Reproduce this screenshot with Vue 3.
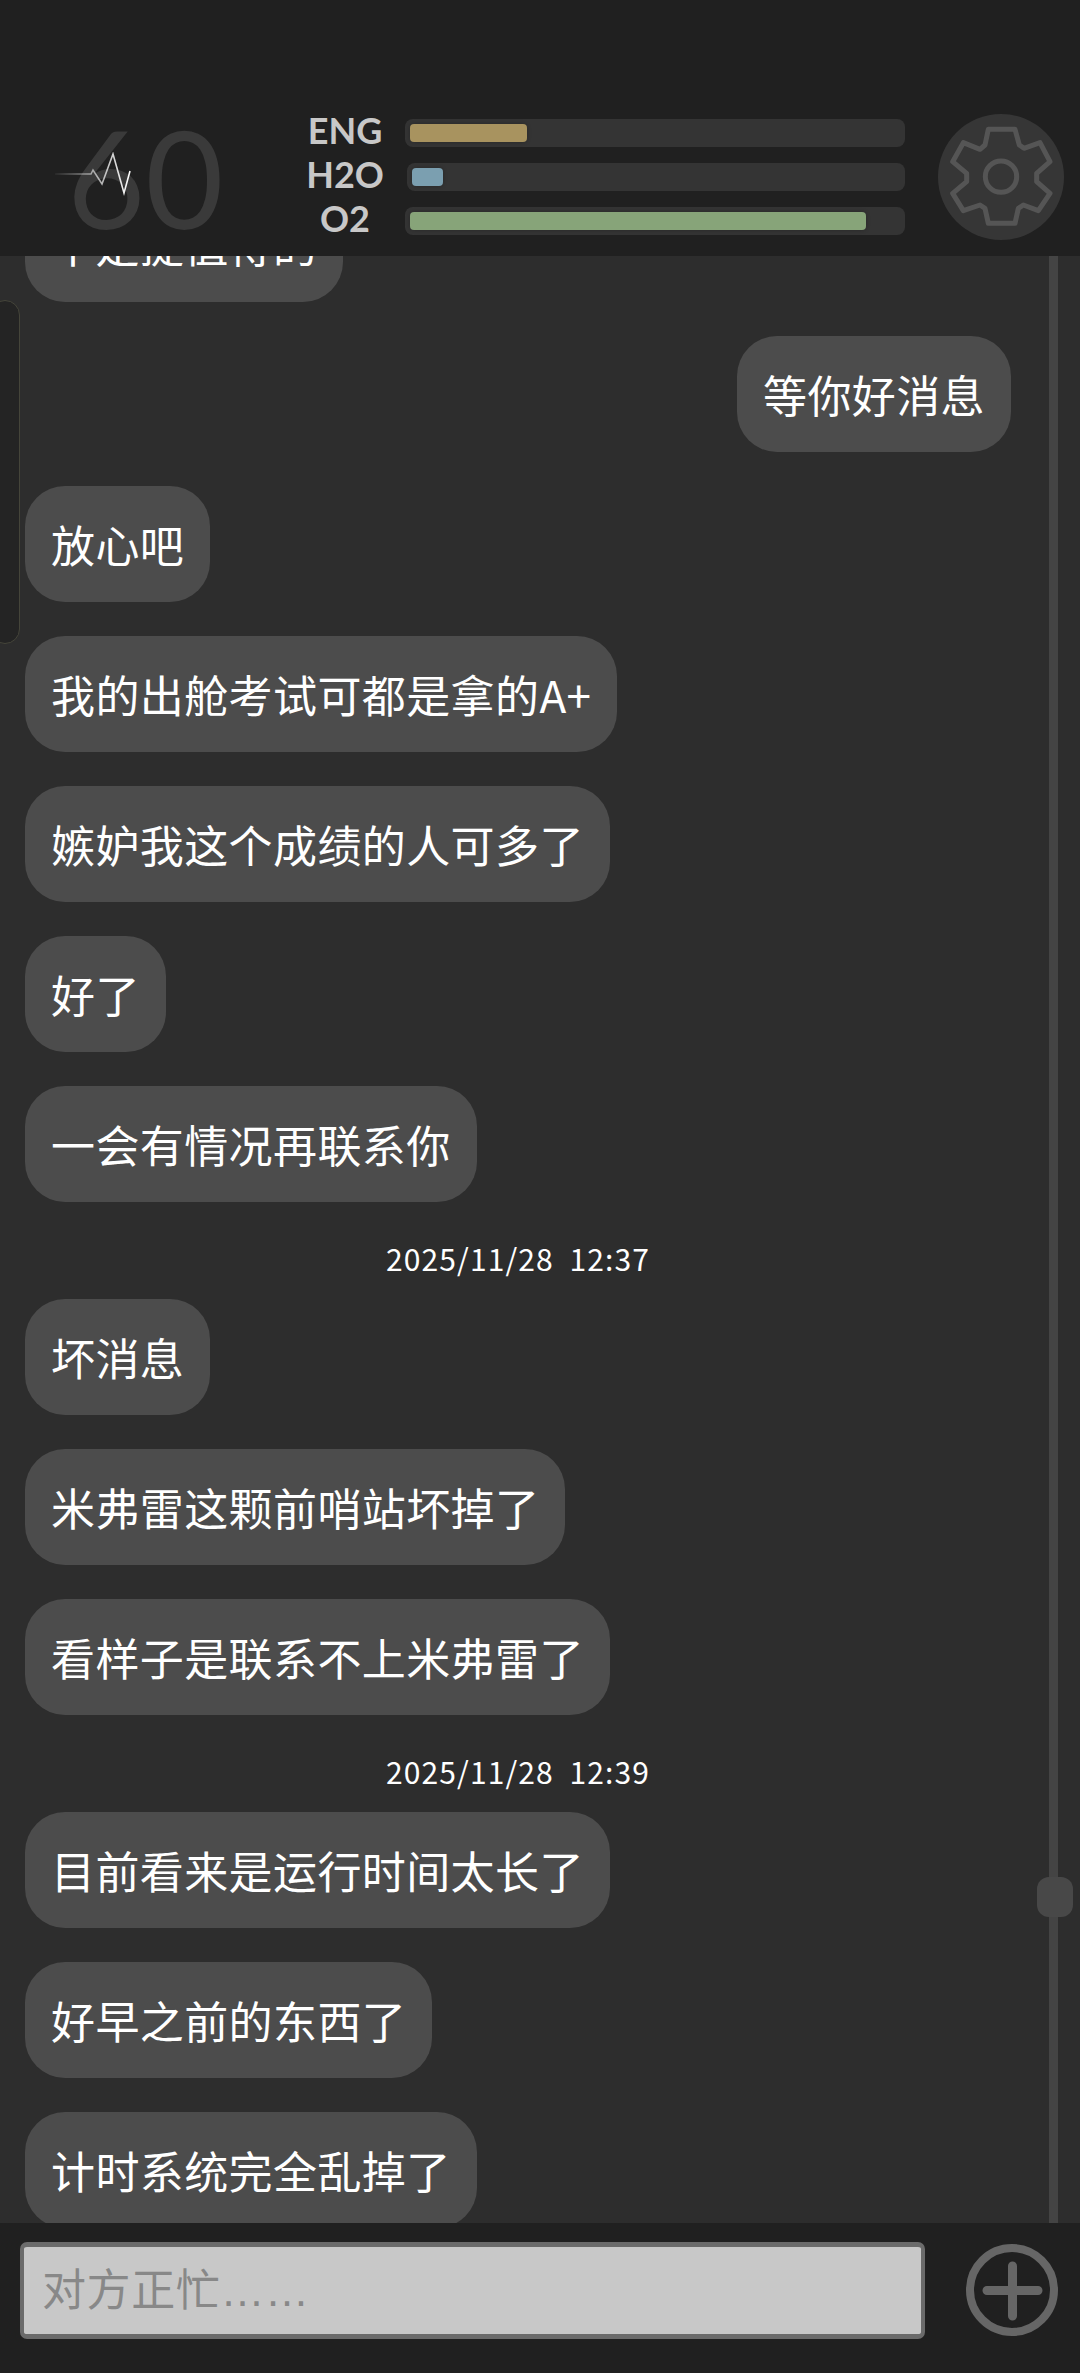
<template>
  <div class="screen">
    <header class="status-bar">
      <div class="heart-rate">
        <span class="rate-value">60</span>
        <svg class="rate-line" width="90" height="50" viewBox="0 0 90 50" fill="none">
          <defs>
            <linearGradient id="pulseFade" x1="0" y1="0" x2="1" y2="0">
              <stop offset="0" stop-color="#fff" stop-opacity="0.05" />
              <stop offset="0.5" stop-color="#fff" stop-opacity="0.55" />
              <stop offset="1" stop-color="#fff" />
            </linearGradient>
          </defs>
          <path
            d="M0 22 H36 L38 18 L47 32 L58 2 L69 41 L75 19"
            stroke="url(#pulseFade)"
            stroke-width="1.6"
          />
        </svg>
      </div>

      <div class="meters">
        <div v-for="meter in meters" :key="meter.label" class="meter">
          <span class="meter-label">{{ meter.label }}</span>
          <div class="meter-track" :class="meter.cls">
            <div class="meter-fill" :style="{ width: meter.fill + 'px' }"></div>
          </div>
        </div>
      </div>

      <button class="settings" type="button" aria-label="Settings">
        <svg width="126" height="126" viewBox="174 72 378 378" fill="none">
          <path
            class="gear"
            d="M325 118 H405 L418 165 L432 175 L480 158 L510 215 L470 250 V275 L510 310 L475 362 L430 345 L415 355 L405 400 H325 L315 355 L300 345 L250 362 L218 310 L260 275 V250 L218 215 L250 158 L300 178 L315 165 Z"
          />
          <circle class="gear" cx="363" cy="260" r="47" />
        </svg>
      </button>
    </header>

    <main class="chat">
      <div class="side-tab"></div>
      <ul class="messages">
        <template v-for="(item, index) in messages" :key="index">
          <li v-if="item.time" class="timestamp">{{ item.time }}</li>
          <li v-else class="message" :class="{ mine: item.mine }">
            <span class="bubble">{{ item.text }}</span>
          </li>
        </template>
      </ul>
      <div class="scroll-track">
        <div class="scroll-thumb"></div>
      </div>
    </main>

    <footer class="composer">
      <div class="input-box">对方正忙……</div>
      <button class="add" type="button" aria-label="Add">
        <svg width="92" height="92" viewBox="0 0 92 92" fill="none">
          <circle cx="46" cy="46" r="42" />
          <path d="M46.5 22 V72 M21 46.5 H72" class="plus" />
        </svg>
      </button>
    </footer>
  </div>
</template>

<script setup>
const meters = [
  { label: 'ENG', fill: 117, cls: '' },
  { label: 'H2O', fill: 31, cls: 'water' },
  { label: 'O2', fill: 456, cls: 'oxygen' },
];

const messages = [
  { text: '不是提值得的' },
  { text: '等你好消息', mine: true },
  { text: '放心吧' },
  { text: '我的出舱考试可都是拿的A+' },
  { text: '嫉妒我这个成绩的人可多了' },
  { text: '好了' },
  { text: '一会有情况再联系你' },
  { time: '2025/11/28  12:37' },
  { text: '坏消息' },
  { text: '米弗雷这颗前哨站坏掉了' },
  { text: '看样子是联系不上米弗雷了' },
  { time: '2025/11/28  12:39' },
  { text: '目前看来是运行时间太长了' },
  { text: '好早之前的东西了' },
  { text: '计时系统完全乱掉了' },
];
</script>

<style>
html,
body {
  margin: 0;
  background: #202020;
}
</style>

<style scoped>
.screen {
  display: flex;
  flex-direction: column;
  height: 2373px;
  overflow: hidden;
  font-family: "Noto Sans CJK SC", "Noto Sans", sans-serif;
  background: #2d2d2d;
}

.status-bar {
  flex: 0 0 256px;
  box-sizing: border-box;
  display: flex;
  align-items: flex-start;
  padding-top: 114px;
  background: #202020;
  position: relative;
  z-index: 2;
}

.heart-rate {
  width: 290px;
  height: 126px;
  position: relative;
  flex: none;
}

.rate-value {
  position: absolute;
  left: 67px;
  top: -17px;
  font-family: Lato, sans-serif;
  font-size: 135px;
  line-height: 160px;
  color: #3a3a3a;
}

.rate-line {
  position: absolute;
  left: 55px;
  top: 38px;
}

.meters {
  width: 615px;
  flex: none;
  display: flex;
  flex-direction: column;
  gap: 16px;
  margin-top: 5px;
}

.meter {
  display: flex;
  align-items: center;
  height: 28px;
}

.meter-label {
  width: 115px;
  padding: 0 5px 6px 0;
  box-sizing: border-box;
  flex: none;
  text-align: center;
  font-family: Lato, sans-serif;
  font-weight: 700;
  font-size: 36px;
  line-height: 28px;
  color: #c8c8c8;
  white-space: nowrap;
}

.meter-track {
  width: 500px;
  height: 28px;
  box-sizing: border-box;
  padding: 5px;
  border-radius: 8px;
  background: #343434;
}

.meter-track.water {
  margin-left: 2px;
  width: 498px;
}

.meter-fill {
  height: 18px;
  border-radius: 4px;
  background: #a8935f;
  box-shadow: 0 0 4px rgba(0, 0, 0, 0.25);
}

.water .meter-fill {
  background: #7b9fb0;
}

.oxygen .meter-fill {
  background: #87a479;
}

.settings {
  flex: none;
  margin-left: 33px;
  width: 126px;
  height: 126px;
  padding: 0;
  border: none;
  border-radius: 50%;
  background: #363636;
}

.settings svg {
  display: block;
}

.gear {
  stroke: #555;
  stroke-width: 15;
  stroke-linejoin: round;
}

.chat {
  flex: 1;
  position: relative;
  overflow: hidden;
}

.side-tab {
  position: absolute;
  left: -10px;
  top: 44px;
  width: 28px;
  height: 342px;
  border: 1px solid #45453a;
  border-radius: 15px;
  background: #242424;
}

.messages {
  list-style: none;
  margin: -70px 0 0;
  padding: 0 69px 0 25px;
}

.message {
  display: flex;
  margin-bottom: 34px;
}

.message.mine {
  justify-content: flex-end;
}

.bubble {
  box-sizing: border-box;
  height: 116px;
  padding: 0 26px;
  border-radius: 40px;
  background: #4c4c4c;
  color: #fff;
  font-size: 44px;
  letter-spacing: 0.4px;
  line-height: 116px;
  white-space: nowrap;
}

.timestamp {
  height: 44px;
  margin: 0 0 19px;
  text-align: center;
  color: #fff;
  font-size: 30px;
  letter-spacing: 1.1px;
  line-height: 44px;
  white-space: pre;
}

.scroll-track {
  position: absolute;
  top: 0;
  bottom: 0;
  left: 1049px;
  width: 9px;
  background: #444;
}

.scroll-thumb {
  position: absolute;
  left: -12px;
  top: 1621px;
  width: 36px;
  height: 40px;
  border-radius: 12px;
  background: #484848;
}

.composer {
  flex: 0 0 150px;
  display: flex;
  align-items: flex-start;
  padding-top: 19px;
  box-sizing: border-box;
  background: #202020;
  position: relative;
  z-index: 2;
}

.input-box {
  box-sizing: border-box;
  width: 905px;
  height: 97px;
  margin-left: 20px;
  padding-left: 18px;
  border-style: solid;
  border-color: #6b6b6b;
  border-width: 5px 4px;
  border-radius: 7px;
  background: #c8c8c8;
  color: #888;
  font-family: "Liberation Sans", "Noto Sans CJK SC", sans-serif;
  font-size: 44px;
  letter-spacing: 0.6px;
  line-height: 87px;
}

.add {
  flex: none;
  margin: 2px 0 0 41px;
  width: 92px;
  height: 92px;
  padding: 0;
  border: none;
  background: none;
}

.add svg {
  display: block;
}

.add circle {
  stroke: #666;
  stroke-width: 8;
}

.plus {
  stroke: #666;
  stroke-width: 9;
  stroke-linecap: round;
}
</style>
